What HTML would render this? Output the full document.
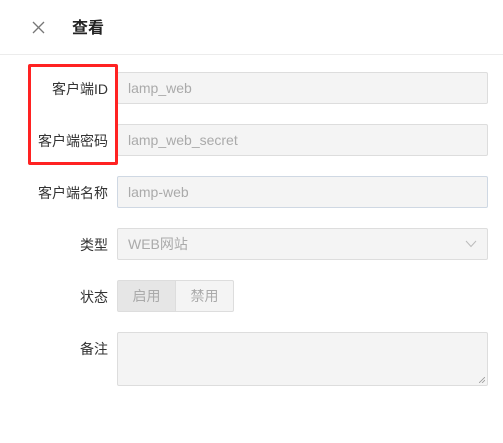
<!DOCTYPE html><html><head><meta charset="utf-8"><style>
*{box-sizing:border-box;margin:0;padding:0}
body{width:503px;height:443px;background:#fff;font-family:"Liberation Sans","Noto Sans CJK SC",sans-serif;position:relative;overflow:hidden;color:#333}
.hd{position:absolute;left:0;top:54px;width:503px;height:1px;background:#ececec}
.t{position:absolute;left:72px;top:14px;font-size:16px;font-weight:bold;color:#222}
.lb{position:absolute;right:395px;font-size:14px;color:#333;white-space:nowrap}
.in{position:absolute;left:117px;width:371px;height:32px;background:#f4f4f4;border:1px solid #ddd;border-radius:2px;font-size:14px;color:#aaa;padding:0 10px;line-height:30px}
.red{position:absolute;left:28px;top:64px;width:90px;height:101px;border:3px solid #f22;border-radius:2px}
.btn{position:absolute;top:280px;height:32px;width:59px;border:1px solid #ddd;font-size:14px;color:#aaa;text-align:center;line-height:30px}
</style></head><body>
<svg style="position:absolute;left:32px;top:21px" width="13" height="13" viewBox="0 0 13 13"><path d="M1 1L12 12M12 1L1 12" stroke="#777" stroke-width="1.3"/></svg>
<div class="t">查看</div>
<div class="hd"></div>
<div class="lb" style="top:79px">客户端ID</div>
<div class="in" style="top:72px">lamp_web</div>
<div class="lb" style="top:131px">客户端密码</div>
<div class="in" style="top:124px">lamp_web_secret</div>
<div class="lb" style="top:183px">客户端名称</div>
<div class="in" style="top:176px;border-color:#cfd8e3">lamp-web</div>
<div class="lb" style="top:235px">类型</div>
<div class="in" style="top:228px">WEB网站</div>
<svg style="position:absolute;left:465px;top:240px" width="12" height="8" viewBox="0 0 12 8"><path d="M1 1L6 6.5L11 1" stroke="#bbb" fill="none" stroke-width="1"/></svg>
<div class="lb" style="top:287px">状态</div>
<div class="btn" style="left:117px;background:#e6e6e6;border-radius:2px 0 0 2px">启用</div>
<div class="btn" style="left:175px;background:#f4f4f4;border-radius:0 2px 2px 0">禁用</div>
<div class="lb" style="top:339px">备注</div>
<div class="in" style="top:332px;height:54px"></div>
<svg style="position:absolute;left:479px;top:377px" width="6" height="6"><path d="M0 6L6 0M3 6L6 3" stroke="#999" stroke-width="0.8"/></svg>
<div class="red"></div>
</body></html>
